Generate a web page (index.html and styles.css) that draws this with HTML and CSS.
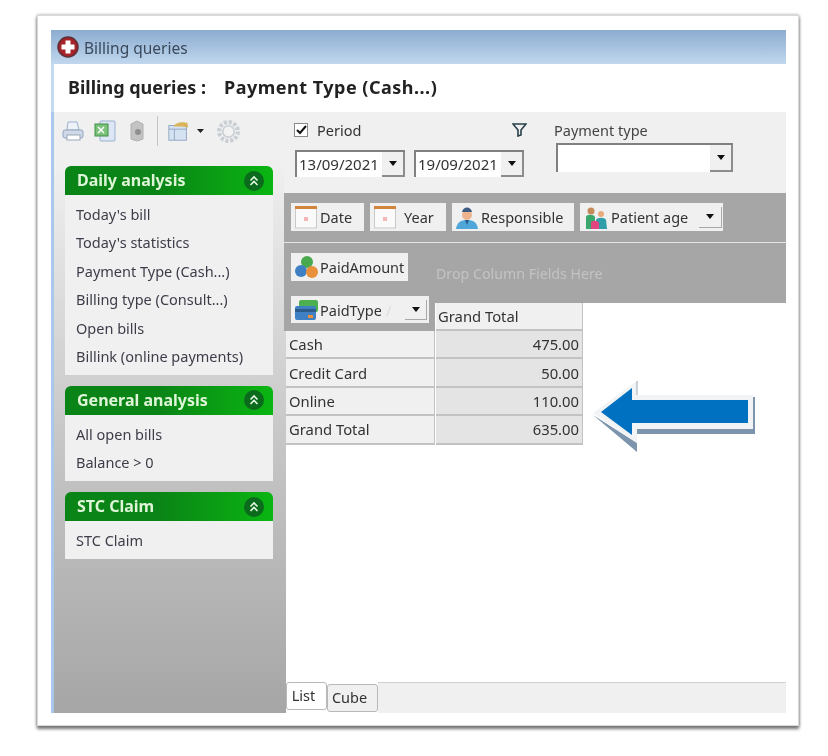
FILE: index.html
```html
<!DOCTYPE html>
<html lang="en">
<head>
<meta charset="utf-8">
<title>Billing queries</title>
<link rel="stylesheet" href="styles.css">
</head>
<body>
<div class="sheet">
  <div class="window">
    <div class="titlebar">
      <svg class="app-icon" width="22" height="22" viewBox="0 0 22 22"><circle cx="11" cy="11" r="10" fill="#a5222a" stroke="#5c3034" stroke-width="1.5"/><path d="M8.5 4.500h5v4h4v5h-4v4h-5v-4h-4v-5h4z" fill="#fff"/></svg>
      <span>Billing queries</span>
    </div>
    <div class="heading"><span>Billing queries :</span><span>Payment Type (Cash...)</span></div>
    <div class="content">
      <aside class="sidebar">
        <div class="toolbar">
          <svg width="26" height="24" viewBox="0 0 24 24"><path d="M7 3h9l2 8H6z" fill="#eef3fa" stroke="#9db2cf"/><rect x="2" y="11" width="20" height="8" rx="2" fill="#cfd9e8" stroke="#8fa3bf"/><rect x="6" y="16" width="13" height="5" fill="#fff" stroke="#9aa7b8"/></svg>
          <svg class="tb-excel" width="24" height="24" viewBox="0 0 24 24"><rect x="7" y="2" width="15" height="20" rx="1" fill="#dce6f5" stroke="#9db2cf"/><rect x="2" y="5" width="13" height="12" fill="#7cc17a" stroke="#3f8f45"/><path d="M5 8l6 6M11 8l-6 6" stroke="#fff" stroke-width="1.500"/></svg>
          <svg class="tb-box" width="20" height="24" viewBox="0 0 20 24"><path d="M4 5l6-3 6 3v15l-6 2-6-2z" fill="#c3c3c3" stroke="#b0b0b0"/><circle cx="11" cy="13" r="3" fill="#8f8f8f"/></svg>
          <i class="tool-sep"></i>
          <svg class="tb-open" width="24" height="24" viewBox="0 0 26 24"><rect x="2" y="6" width="19" height="16" fill="#d5e2f1" stroke="#8fa6c2"/><path d="M2 10h19M8 10v12" stroke="#8fa6c2"/><path d="M7 7c3-5 10-5 15-4l1 5c-5-1-11-1-16-1z" fill="#d8b55a"/></svg>
          <svg class="tool-caret" width="7" height="4" viewBox="0 0 7 4"><path d="M0 0h7L3.500 4z" fill="#222"/></svg>
          <svg class="tb-gear" width="25" height="25" viewBox="0 0 24 24"><circle cx="12" cy="12" r="9" fill="none" stroke="#c9ced4" stroke-width="4" stroke-dasharray="3 1.700"/><circle cx="12" cy="12" r="5.500" fill="#f2f2f2" stroke="#c9ced4" stroke-width="1.500"/></svg>
        </div>
        <section class="panel">
          <h2 class="panel-head"><span>Daily analysis</span><svg class="chev" width="20" height="20" viewBox="0 0 20 20"><circle cx="10" cy="10" r="10" fill="#0a6b1d"/><path d="M6.500 9.500L10 6l3.500 3.500M6.500 14L10 10.500l3.500 3.500" fill="none" stroke="#e6f7e6" stroke-width="1.600"/></svg></h2>
          <ul class="panel-body">
            <li>Today's bill</li>
            <li>Today's statistics</li>
            <li>Payment Type (Cash...)</li>
            <li>Billing type (Consult...)</li>
            <li>Open bills</li>
            <li>Billink (online payments)</li>
          </ul>
        </section>
        <section class="panel">
          <h2 class="panel-head"><span>General analysis</span><svg class="chev" width="20" height="20" viewBox="0 0 20 20"><circle cx="10" cy="10" r="10" fill="#0a6b1d"/><path d="M6.500 9.500L10 6l3.500 3.500M6.500 14L10 10.500l3.500 3.500" fill="none" stroke="#e6f7e6" stroke-width="1.600"/></svg></h2>
          <ul class="panel-body">
            <li>All open bills</li>
            <li>Balance &gt; 0</li>
          </ul>
        </section>
        <section class="panel">
          <h2 class="panel-head"><span>STC Claim</span><svg class="chev" width="20" height="20" viewBox="0 0 20 20"><circle cx="10" cy="10" r="10" fill="#0a6b1d"/><path d="M6.500 9.500L10 6l3.500 3.500M6.500 14L10 10.500l3.500 3.500" fill="none" stroke="#e6f7e6" stroke-width="1.600"/></svg></h2>
          <ul class="panel-body">
            <li>STC Claim</li>
          </ul>
        </section>
      </aside>
      <main class="main">
        <div class="filters">
          <div class="filter-period">
            <div class="period-row">
              <label class="check"><span class="checkbox"><svg width="11" height="10" viewBox="0 0 11 10"><path d="M1 5l3 3 6-7" fill="none" stroke="#111" stroke-width="2"/></svg></span>Period</label>
              <svg width="15" height="14" viewBox="0 0 15 14"><path d="M1 1h13L9 7v5l-3 1V7z" fill="none" stroke="#27404a" stroke-width="1.600"/></svg>
            </div>
            <div class="date-row">
              <div class="combo date"><span>13/09/2021</span><span class="drop"><i></i></span></div>
              <div class="combo date"><span>19/09/2021</span><span class="drop"><i></i></span></div>
            </div>
          </div>
          <div class="filter-type">
            <div class="type-label">Payment type</div>
            <div class="combo type"><span></span><span class="drop"><i></i></span></div>
          </div>
        </div>
        <div class="pivot">
          <div class="pivot-row fields">
            <div class="field f-date"><svg width="24" height="24" viewBox="0 0 24 24"><rect x="1.500" y="2" width="21" height="21" fill="#fafafa" stroke="#c9c9c9"/><rect x="1" y="1" width="22" height="3" fill="#d0843c"/><rect x="10" y="12" width="4" height="4" fill="#f3b7b7"/></svg>Date</div>
            <div class="field f-year"><svg width="24" height="24" viewBox="0 0 24 24"><rect x="1.500" y="2" width="21" height="21" fill="#fafafa" stroke="#c9c9c9"/><rect x="1" y="1" width="22" height="3" fill="#d0843c"/><rect x="10" y="12" width="4" height="4" fill="#f3b7b7"/></svg><span>Year</span></div>
            <div class="field f-resp"><svg width="24" height="24" viewBox="0 0 24 24"><path d="M1 24c1-7 5-9 11-9s10 2 11 9z" fill="#4fa6d8"/><circle cx="12" cy="10" r="5" fill="#eeb48e"/><path d="M7 7c1-6 9-6 10 0z" fill="#3d5a80"/><path d="M10 15h4l-2 5z" fill="#2b5c8a"/></svg>Responsible</div>
            <div class="field f-age"><svg width="26" height="24" viewBox="0 0 24 24"><circle cx="7" cy="6" r="3.500" fill="#c58a5a"/><path d="M2 24V12c0-3 8-3 9 0v12z" fill="#3aa76d"/><circle cx="17" cy="9" r="3" fill="#e8a97e"/><path d="M12 24v-9c1-3 9-3 10 0l1 9z" fill="#2f9ea8"/><path d="M7 24v-6c0-3 7-3 8 0v6z" fill="#e0457f"/></svg>Patient age<span class="drop"><i></i></span></div>
          </div>
          <div class="pivot-row columns">
            <div class="field f-paid"><svg width="26" height="24" viewBox="0 0 26 24"><circle cx="13" cy="7" r="6" fill="#4aa84e"/><circle cx="7" cy="16" r="6" fill="#3f7fc4"/><circle cx="18" cy="17" r="6" fill="#e8913a"/></svg>PaidAmount</div>
            <span class="drop-hint">Drop Column Fields Here</span>
          </div>
        </div>
        <div class="grid">
          <div class="corner">
            <div class="field f-type"><svg width="26" height="24" viewBox="0 0 26 24"><rect x="5" y="2" width="19" height="12" rx="2" fill="#4caf50"/><rect x="1" y="8" width="21" height="14" rx="2" fill="#3f7fc4"/><rect x="1" y="11" width="21" height="3" fill="#2b5c8a"/><rect x="14" y="17" width="5" height="3" fill="#e8913a"/></svg><span class="clip">PaidType</span><span class="sort">/</span><span class="drop"><i></i></span></div>
          </div>
          <div class="col-head">Grand Total</div>
          <div class="row-head">Cash</div><div class="value">475.00</div>
          <div class="row-head">Credit Card</div><div class="value">50.00</div>
          <div class="row-head">Online</div><div class="value">110.00</div>
          <div class="row-head">Grand Total</div><div class="value">635.00</div>
        </div>
        <div class="tabs">
          <div class="tab active">List</div>
          <div class="tab">Cube</div>
          <div class="tab-fill"></div>
        </div>
      </main>
    </div>
  </div>
  <svg class="arrow" width="168" height="78" viewBox="0 0 168 78"><path d="M3 37L47 74V56H165V19H163V51H47V65z" fill="#7d94ad"/><path d="M3 35L47 3V17H163V51H47V65z" fill="#f1f3f4"/><path d="M47 3V17" stroke="#9aa8b5" fill="none"/><path d="M11 34L42 10V22H158V45H42V57z" fill="#0070c0"/></svg>
</div>
</body>
</html>
```

FILE: styles.css
```css
* { box-sizing: border-box; }
html, body { margin: 0; padding: 0; background: #fff; }
body {
  width: 828px;
  height: 756px;
  overflow: hidden;
  font-family: "Noto Sans", "Open Sans", sans-serif;
  font-size: 14.500px;
  color: #333;
}
.sheet {
  position: relative;
  width: 762px;
  height: 711px;
  margin: 15px 0 0 37px;
  padding: 15px 13px 13px 14px;
  background: #fff;
  border: 1px solid #d8d8d8;
  box-shadow: 0 3px 3px #777, 0 0 3px #999;
}
.window {
  display: flex;
  flex-direction: column;
  width: 735px;
  height: 683px;
  margin: -1px 0 0 -1px;
  filter: blur(0.35px);
}
.titlebar {
  display: flex;
  align-items: center;
  gap: 5px;
  height: 34px;
  padding-left: 6px;
  background: linear-gradient(#8cacd0, #c0d7ee);
  color: #3c4a5c;
  font-size: 15.500px;
}
.titlebar span { margin-top: 2px; }
.heading {
  display: flex;
  gap: 18px;
  align-items: center;
  height: 48px;
  padding-left: 14px;
  border-left: 3px solid #c4daf0;
  background: #fff;
  font-size: 18px;
  font-weight: 700;
  color: #222;
}
.heading span { margin-top: -2px; }
.heading span:last-child { letter-spacing: 0.5px; }
.content { display: flex; flex: 1; min-height: 0; }
.sidebar {
  width: 235px;
  padding: 0 11px;
  border-left: 3px solid #a9c9ec;
  background: linear-gradient(#f0f0f0 0, #f0f0f0 8%, #c6c6c6 55%, #a6a6a6 100%);
}
.toolbar {
  display: flex;
  align-items: center;
  height: 54px;
  padding-bottom: 16px;
  margin-left: -5px;
}
.tb-excel { margin-left: 7px; }
.tb-box { margin-left: 10px; }
.tool-sep { width: 1px; height: 30px; margin-left: 10px; background: #c4c4c4; }
.tb-open { margin-left: 9px; }
.tool-caret { margin-left: 6px; }
.tb-gear { margin-left: 12px; }
.panel { width: 208px; margin-bottom: 11px; }
.panel-head {
  display: flex;
  align-items: center;
  justify-content: space-between;
  height: 29px;
  margin: 0;
  padding: 0 9px 0 12px;
  border-radius: 6px 6px 0 0;
  background: linear-gradient(90deg, #0a8416, #0a8416 45%, #0ab612);
  color: #dff5d8;
  font-size: 16px;
  font-weight: 700;
}
.panel-head span { margin-top: -1px; }
.panel-body {
  margin: 0;
  padding: 5px 0 4.500px 11px;
  list-style: none;
  background: #f0f0f0;
  color: #3d3d4a;
  font-size: 14.500px;
  line-height: 28.400px;
}
.main {
  display: flex;
  flex-direction: column;
  width: 500px;
  background: #fff;
}
.filters {
  display: flex;
  height: 81px;
  margin-left: -2px;
  padding: 9px 0 0 10px;
  background: #f0f0f0;
}
.filter-period { width: 261px; }
.period-row {
  display: flex;
  align-items: center;
  justify-content: space-between;
  width: 233px;
  height: 18px;
}
.check { display: flex; align-items: center; gap: 9px; }
.checkbox {
  display: flex;
  align-items: center;
  justify-content: center;
  width: 14px;
  height: 14px;
  background: #fff;
  border: 1px solid #8a8a8a;
}
.date-row { display: flex; gap: 9px; margin: 11px 0 0 1px; }
.combo {
  display: flex;
  align-items: stretch;
  justify-content: space-between;
  background: #fff;
  border-top: 2px solid #808080;
  border-left: 2px solid #808080;
}
.combo.date { width: 110px; height: 27px; padding-left: 2px; line-height: 24px; font-size: 15px; color: #333; }
.combo.type { width: 177px; height: 29px; margin: 4px 0 0 1px; }
.type-label { margin-left: -1px; line-height: 18px; color: #444; }
.drop {
  display: flex;
  align-items: center;
  justify-content: center;
  width: 23px;
  background: #f0f0f0;
  border-right: 2px solid #8c8c8c;
  border-bottom: 2px solid #8c8c8c;
}
.drop i {
  display: block;
  width: 0;
  height: 0;
  border: 4px solid transparent;
  border-top: 5px solid #111;
  border-bottom: 0;
}
.pivot {
  height: 110px;
  margin-left: -2px;
  background: #a6a6a6;
}
.pivot-row { display: flex; align-items: flex-start; padding-left: 7px; }
.fields {
  gap: 6px;
  height: 50px;
  padding-top: 10px;
  border-bottom: 1px solid #e4e4e4;
}
.columns { padding-top: 10px; }
.field {
  display: flex;
  align-items: center;
  height: 28px;
  padding-left: 3px;
  background: #f0f0f0;
  color: #333;
  font-size: 14.500px;
  white-space: nowrap;
}
.field .drop { border-width: 1px; border-color: #a8a8a8; }
.f-date { width: 73px; gap: 2px; }
.f-year { width: 76px; }
.f-year span { margin-left: 7px; }
.f-resp { width: 122px; gap: 2px; }
.f-age { width: 143px; gap: 2px; }
.f-age .drop { width: 23px; height: 21px; margin-left: 9px; }
.f-paid { width: 117px; }
.drop-hint { margin: 11px 0 0 28px; color: #c3c3c3; font-size: 14.200px; }
.grid {
  display: grid;
  grid-template-columns: 149px 148px;
  grid-template-rows: 28px repeat(4, 28.400px);
  width: 297px;
}
.corner {
  margin-left: -2px;
  padding-left: 7px;
  background: #a6a6a6;
}
.f-type {
  width: 138px;
  height: 27px;
  margin-top: -7px;
}
.clip { width: 61px; overflow: hidden; }
.sort { width: 24px; padding-left: 5px; color: #ddd; }
.f-type .drop { width: 22px; height: 20px; }
.col-head, .row-head, .value {
  display: flex;
  align-items: center;
  padding: 0 3px;
  border-right: 1px solid #c2c2c2;
  border-bottom: 2px solid #c2c2c2;
  color: #333;
  font-size: 14.800px;
}
.col-head { margin-left: 1px; padding-left: 2px; background: #f0f0f0; }
.row-head { background: #f0f0f0; }
.value {
  justify-content: flex-end;
  margin-left: 1px;
  background: #e4e4e4;
}
.tabs {
  display: flex;
  align-items: flex-start;
  height: 31px;
  margin-top: auto;
}
.tab {
  width: 41px;
  height: 28px;
  padding-right: 6px;
  border: 1px solid #b8b8b8;
  border-radius: 3px;
  background: #fff;
  color: #333;
  font-size: 14.500px;
  line-height: 24px;
  text-align: center;
}
.tab + .tab {
  width: 51px;
  margin-top: 2px;
  background: #f0f0f0;
}
.tab-fill {
  flex: 1;
  height: 31px;
  background: #f0f0f0;
  border-top: 1px solid #d0d0d0;
}
.arrow {
  position: absolute;
  left: 552px;
  top: 362px;
  filter: blur(0.4px);
}
```
